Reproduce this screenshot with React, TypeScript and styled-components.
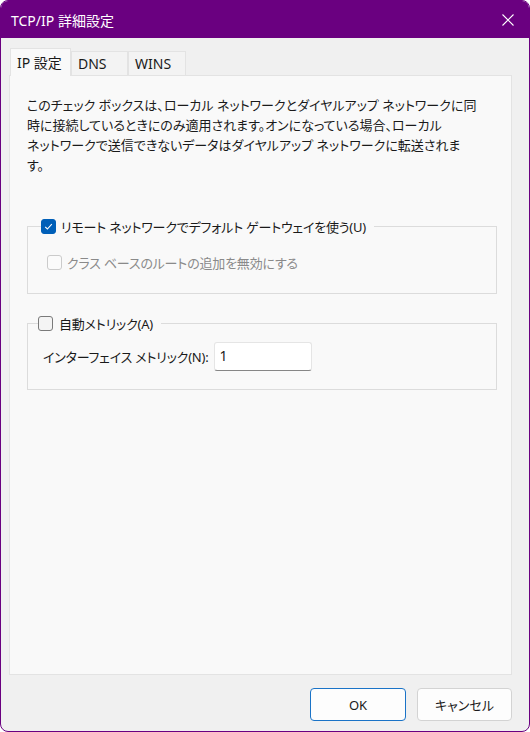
import styled, { createGlobalStyle } from "styled-components";

const GlobalStyle = createGlobalStyle`
  html, body {
    margin: 0;
    padding: 0;
    background: #ffffff;
  }
  body {
    font-family: "Noto Sans", "Noto Sans CJK JP", sans-serif;
    font-feature-settings: "palt";
    color: #1a1a1a;
  }
  * {
    box-sizing: border-box;
  }
`;

const Window = styled.div`
  width: 530px;
  height: 732px;
  border: 1px solid #6a0080;
  border-radius: 8px;
  overflow: hidden;
  display: flex;
  flex-direction: column;
  background: #f0f0f0;
`;

const TitleBar = styled.div`
  flex: none;
  height: 37px;
  display: flex;
  align-items: center;
  padding-left: 10px;
  background: #6a0080;
  color: #ffffff;
  font-size: 14px;
`;

const Title = styled.div`
  flex: 1;
`;

const CloseButton = styled.div`
  width: 42px;
  height: 37px;
  display: flex;
  align-items: center;
  justify-content: center;
`;

const Body = styled.div`
  flex: 1;
  display: flex;
  flex-direction: column;
  padding: 10px 17px 10px 8px;
`;

const TabStrip = styled.div`
  display: flex;
  align-items: flex-end;
  height: 28px;
  margin: 0 0 -1px 1px;
  position: relative;
  z-index: 1;
`;

const Tab = styled.div<{ $active?: boolean; $width: number }>`
  width: ${(p) => p.$width}px;
  height: ${(p) => (p.$active ? 28 : 25)}px;
  display: flex;
  align-items: center;
  padding: ${(p) => (p.$active ? "0 0 2px 6px" : "0 0 0 6px")};
  border: 1px solid #e3e3e3;
  border-bottom: ${(p) => (p.$active ? "none" : "1px solid #e3e3e3")};
  background: ${(p) => (p.$active ? "#f9f9f9" : "#f3f3f3")};
  font-size: 14px;
  white-space: nowrap;
`;

const Panel = styled.div`
  flex: 1;
  border: 1px solid #e3e3e3;
  background: #f9f9f9;
  padding: 19px 14px 0 17px;
`;

const Description = styled.p`
  margin: 0 0 42px;
  font-size: 13px;
  line-height: 20px;
  white-space: nowrap;
`;

const Group = styled.fieldset<{ $inset: number }>`
  margin: 0;
  border: 1px solid #dcdcdc;
  padding: 0 0 0 ${(p) => p.$inset}px;
  min-width: 0;
`;

const Legend = styled.legend<{ $gap: number }>`
  padding: 0 8px 0 0;
  display: flex;
  align-items: center;
  gap: ${(p) => p.$gap}px;
  height: 18px;
  font-size: 13px;
`;

const Row = styled.div<{ $indent: number; $top: number; $bottom: number }>`
  display: flex;
  align-items: center;
  gap: 5px;
  margin: ${(p) => p.$top}px 0 ${(p) => p.$bottom}px ${(p) => p.$indent}px;
  font-size: 13px;
  min-height: 20px;
`;

const Label = styled.span<{ $disabled?: boolean }>`
  color: ${(p) => (p.$disabled ? "#8a8a8a" : "#1a1a1a")};
  white-space: nowrap;
  letter-spacing: -0.2px;
`;

const Box = styled.span<{ $checked?: boolean; $disabled?: boolean }>`
  flex: none;
  width: 15px;
  height: 15px;
  border-radius: 3px;
  display: flex;
  align-items: center;
  justify-content: center;
  border: 1px solid
    ${(p) => (p.$checked ? "#005fb8" : p.$disabled ? "#cbcbcb" : "#7a7a7a")};
  background: ${(p) => (p.$checked ? "#005fb8" : p.$disabled ? "#fbfbfb" : "#f4f4f4")};
`;

const GroupGap = styled.div`
  height: 20px;
`;

const MetricInput = styled.div`
  width: 98px;
  height: 29px;
  display: flex;
  align-items: center;
  padding: 0 0 3px 5px;
  background: #ffffff;
  border: 1px solid #e5e5e5;
  border-bottom-color: #868686;
  border-radius: 3px;
  font-size: 14px;
`;

const Footer = styled.div`
  display: flex;
  justify-content: flex-end;
  gap: 11px;
  margin-top: 13px;
`;

const Button = styled.div<{ $primary?: boolean }>`
  width: ${(p) => (p.$primary ? 96 : 95)}px;
  height: 33px;
  display: flex;
  align-items: center;
  justify-content: center;
  border-radius: 4px;
  background: #fdfdfd;
  border: 1px solid ${(p) => (p.$primary ? "#1a73c7" : "#d3d3d3")};
  font-size: 13px;
`;

const Checkbox = ({ checked, disabled }: { checked?: boolean; disabled?: boolean }) => (
  <Box $checked={checked} $disabled={disabled}>
    {checked && (
      <svg width="11" height="11" viewBox="0 0 11 11">
        <path d="M2.2 5.8 L4.4 8 L8.8 3.2" fill="none" stroke="#ffffff" strokeWidth="1.1" />
      </svg>
    )}
  </Box>
);

export default function App() {
  return (
    <>
      <GlobalStyle />
      <Window>
        <TitleBar>
          <Title>TCP/IP 詳細設定</Title>
          <CloseButton>
            <svg width="12" height="12" viewBox="0 0 12 12">
              <path d="M0.5 0.5 L11.5 11.5 M11.5 0.5 L0.5 11.5" stroke="#ffffff" strokeWidth="1.1" />
            </svg>
          </CloseButton>
        </TitleBar>
        <Body>
          <TabStrip>
            <Tab $active $width={61}>IP 設定</Tab>
            <Tab $width={57}>DNS</Tab>
            <Tab $width={58}>WINS</Tab>
          </TabStrip>
          <Panel>
            <Description>
              このチェック ボックスは、ローカル ネットワークとダイヤルアップ ネットワークに同
              <br />
              時に接続しているときにのみ適用されます。オンになっている場合、ローカル
              <br />
              ネットワークで送信できないデータはダイヤルアップ ネットワークに転送されま
              <br />
              す。
            </Description>
            <Group $inset={13}>
              <Legend $gap={5}>
                <Checkbox checked />
                <Label>リモート ネットワークでデフォルト ゲートウェイを使う(U)</Label>
              </Legend>
              <Row $indent={6} $top={17} $bottom={21}>
                <Checkbox disabled />
                <Label $disabled>クラス ベースのルートの追加を無効にする</Label>
              </Row>
            </Group>
            <GroupGap />
            <Group $inset={10}>
              <Legend $gap={6}>
                <Checkbox />
                <Label>自動メトリック(A)</Label>
              </Legend>
              <Row $indent={5} $top={10} $bottom={18}>
                <Label>インターフェイス メトリック(N):</Label>
                <MetricInput>1</MetricInput>
              </Row>
            </Group>
          </Panel>
          <Footer>
            <Button $primary>OK</Button>
            <Button>キャンセル</Button>
          </Footer>
        </Body>
      </Window>
    </>
  );
}
